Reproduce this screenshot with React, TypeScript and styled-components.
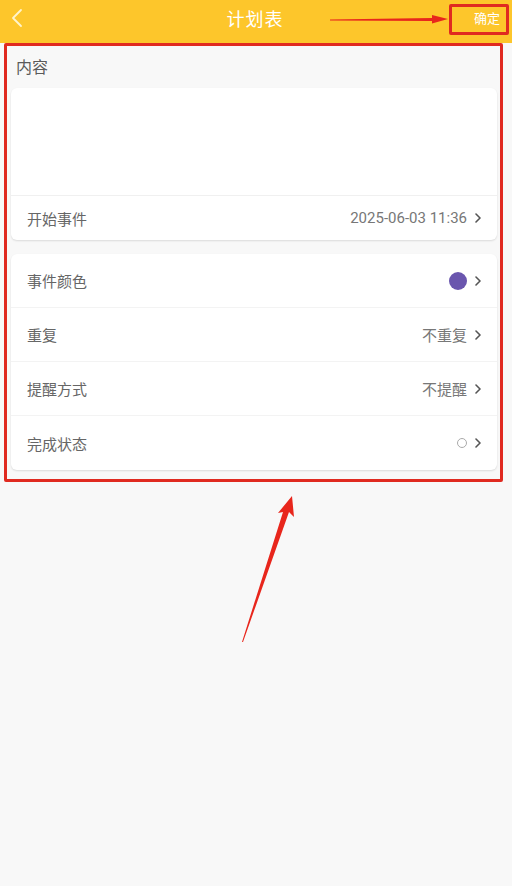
import { createGlobalStyle } from 'styled-components';
import styled from 'styled-components';

const GlobalStyle = createGlobalStyle`
  html, body {
    margin: 0;
    padding: 0;
    background: #f8f8f8;
    font-family: 'Noto Sans CJK SC', 'Noto Sans', sans-serif;
  }
`;

const Page = styled.div({
  position: 'relative',
  width: 512,
  minHeight: 886,
  background: '#f8f8f8',
  overflow: 'hidden',
});

const Header = styled.div({
  height: 43,
  background: '#fdc62b',
  display: 'flex',
  alignItems: 'center',
  justifyContent: 'space-between',
  padding: '0 12px 8px 10px',
  boxSizing: 'border-box',
});

const BackButton = styled.div({
  width: 40,
  display: 'flex',
  alignItems: 'center',
});

const Title = styled.h1({
  margin: 0,
  fontSize: 18,
  fontWeight: 400,
  color: '#fff',
  letterSpacing: 1,
});

const ConfirmButton = styled.div({
  width: 40,
  fontSize: 13,
  color: '#fff',
  textAlign: 'right',
});

const Body = styled.div({
  padding: '0 15px 0 11px',
});

const SectionLabel = styled.div({
  height: 45,
  display: 'flex',
  alignItems: 'center',
  paddingLeft: 5,
  fontSize: 16,
  color: '#5a5a5a',
  boxSizing: 'border-box',
});

const Card = styled.div<{ $gap?: number }>((props) => ({
  background: '#fff',
  borderRadius: 6,
  boxShadow: '0 1px 2px rgba(0, 0, 0, 0.12)',
  marginTop: props.$gap ?? 0,
  overflow: 'hidden',
}));

const TextArea = styled.div({
  height: 107,
  borderBottom: '1px solid #f0f0f0',
});

const Row = styled.div<{ $height: number; $last?: boolean }>((props) => ({
  height: props.$height,
  display: 'flex',
  alignItems: 'center',
  justifyContent: 'space-between',
  padding: '0 16px 0 16px',
  borderBottom: props.$last ? 'none' : '1px solid #f3f3f3',
  boxSizing: 'border-box',
}));

const RowLabel = styled.span({
  fontSize: 15,
  color: '#666',
});

const RowValue = styled.span({
  display: 'flex',
  alignItems: 'center',
  gap: 8,
  fontSize: 15,
  color: '#777',
  fontFamily: "'Roboto', 'Noto Sans CJK SC', sans-serif",
});

const ColorDot = styled.span<{ $color: string }>((props) => ({
  width: 18,
  height: 18,
  borderRadius: '50%',
  background: props.$color,
}));

const StatusDot = styled.span({
  width: 8,
  height: 8,
  borderRadius: '50%',
  border: '1px solid #aaa',
});

const Highlight = styled.div<{ $x: number; $y: number; $w: number; $h: number }>((props) => ({
  position: 'absolute',
  left: props.$x,
  top: props.$y,
  width: props.$w,
  height: props.$h,
  border: '3px solid #e02a20',
  borderRadius: 2,
  boxSizing: 'border-box',
  pointerEvents: 'none',
}));

const Overlay = styled.svg({
  position: 'absolute',
  left: 0,
  top: 0,
  pointerEvents: 'none',
});

function Chevron() {
  return (
    <svg width="6" height="12" viewBox="0 0 6 12">
      <path d="M1 2l4 4-4 4" fill="none" stroke="#555" strokeWidth="1.6" strokeLinecap="round" strokeLinejoin="round" />
    </svg>
  );
}

const rows = [
  { label: '事件颜色', value: 'dot' },
  { label: '重复', value: '不重复' },
  { label: '提醒方式', value: '不提醒' },
  { label: '完成状态', value: 'status' },
];

export default function App() {
  return (
    <>
      <GlobalStyle />
      <Page>
        <Header>
          <BackButton>
            <svg width="14" height="20" viewBox="0 0 14 20">
              <path d="M11 2L3 10l8 8" fill="none" stroke="#fff4cc" strokeWidth="1.8" strokeLinecap="round" strokeLinejoin="round" />
            </svg>
          </BackButton>
          <Title>计划表</Title>
          <ConfirmButton>确定</ConfirmButton>
        </Header>
        <Body>
          <SectionLabel>内容</SectionLabel>
          <Card>
            <TextArea />
            <Row $height={44} $last>
              <RowLabel>开始事件</RowLabel>
              <RowValue>
                2025-06-03 11:36
                <Chevron />
              </RowValue>
            </Row>
          </Card>
          <Card $gap={14}>
            {rows.map((row, i) => (
              <Row key={row.label} $height={54} $last={i === rows.length - 1}>
                <RowLabel>{row.label}</RowLabel>
                <RowValue>
                  {row.value === 'dot' && <ColorDot $color="#6a56ae" />}
                  {row.value === 'status' && <StatusDot />}
                  {row.value !== 'dot' && row.value !== 'status' && row.value}
                  <Chevron />
                </RowValue>
              </Row>
            ))}
          </Card>
        </Body>

        <Highlight $x={449} $y={4} $w={60} $h={31} />
        <Highlight $x={4} $y={43} $w={499} $h={439} />
        <Overlay width="512" height="886" viewBox="0 0 512 886">
          <polygon points="330,19.5 432,18 432,15 448,19 432,23.5 432,21 330,20.5" fill="#e8261c" />
          <polygon points="242,642 283,512 278,513 292,496 294,517 289,512 243,642" fill="#e8261c" />
        </Overlay>
      </Page>
    </>
  );
}
